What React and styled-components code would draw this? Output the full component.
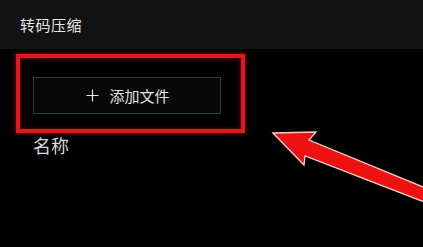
import React from "react";
import styled, { createGlobalStyle } from "styled-components";

const Global = createGlobalStyle`
  html, body { margin: 0; padding: 0; background: #000; }
  body { width: 423px; height: 247px; overflow: hidden; font-family: "Noto Sans CJK SC", "Noto Sans", sans-serif; }
`;

const Page = styled.div`
  position: relative;
  width: 423px;
  height: 247px;
  background: #000;
`;

const Header = styled.header`
  height: 49px;
  background: #121212;
  display: flex;
  align-items: center;
  padding-left: 20px;
  box-sizing: border-box;
`;

const Title = styled.h1`
  margin: 0;
  font-size: 15px;
  font-weight: 400;
  color: #e6e6e6;
  line-height: 1;
  letter-spacing: 0.5px;
`;

const Main = styled.main`
  display: flex;
  flex-direction: column;
  align-items: flex-start;
  padding: 28px 0 0 33px;
`;

const AddButton = styled.button`
  width: 188px;
  height: 37px;
  box-sizing: border-box;
  border: 1px solid #3b3b3b;
  background: #070707;
  color: #e4e4e4;
  display: flex;
  align-items: center;
  justify-content: center;
  gap: 10px;
  font-family: inherit;
  font-size: 15px;
  padding: 0;
  padding-left: 2px;
`;

const PlusIcon = styled.svg`
  width: 13px;
  height: 13px;
  display: block;
`;

const Label = styled.div`
  margin-top: 19px;
  font-size: 18px;
  color: #d8d8d8;
  line-height: 24px;
  margin-left: 0;
`;

const Highlight = styled.div`
  position: absolute;
  left: 16px;
  top: 54px;
  width: 229px;
  height: 79px;
  box-sizing: border-box;
  border: 4.5px solid #e3161e;
  box-shadow: 0 0 3px 1px rgba(150, 0, 0, 0.7), inset 0 0 3px 1px rgba(150, 0, 0, 0.6);
  pointer-events: none;
`;

const ArrowLayer = styled.svg`
  position: absolute;
  left: 0;
  top: 0;
  width: 423px;
  height: 247px;
  pointer-events: none;
`;

export default function App() {
  return (
    <Page>
      <Global />
      <Header>
        <Title>转码压缩</Title>
      </Header>
      <Main>
        <AddButton>
          <PlusIcon viewBox="0 0 13 13">
            <path d="M6.5 0.5V12.5M0.5 6.5H12.5" stroke="#e4e4e4" strokeWidth="1.2" />
          </PlusIcon>
          <span>添加文件</span>
        </AddButton>
        <Label>名称</Label>
      </Main>
      <Highlight />
      <ArrowLayer viewBox="0 0 423 247">
        <polygon
          points="273,133 316,132 309,140 440,194 440,208 305,156 304,165"
          fill="#ee1111"
          stroke="#f6d0c8"
          strokeWidth="1.3"
          strokeLinejoin="miter"
        />
      </ArrowLayer>
    </Page>
  );
}
